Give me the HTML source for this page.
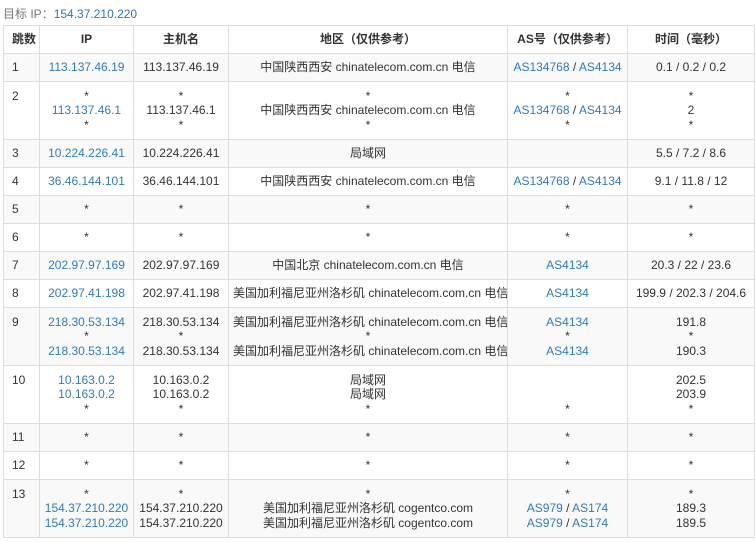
<!DOCTYPE html>
<html><head><meta charset="utf-8"><style>
body{margin:0;background:#fff;font-family:"Liberation Sans","Noto Sans CJK SC",sans-serif;font-size:12px;color:#333;width:756px;height:542px;overflow:hidden}
.t{position:absolute;left:3px;top:5px;color:#777}
.t a{color:#2f75b5}
table{position:absolute;left:3px;top:25px;border-collapse:collapse;width:751px;table-layout:fixed}
td,th{border:1px solid #ddd;text-align:center;vertical-align:middle;padding:0 4px;line-height:14.5px;white-space:nowrap;overflow:hidden}
th{height:27px;font-weight:bold;color:#333}
td{height:27px}
tr.m td{height:57px}
tr.s td{background:#f9f9f9}
td:first-child,th:first-child{text-align:left;padding-left:8px}
tr.m td:first-child{vertical-align:top;padding-top:7px;height:50px}
a{color:#2f7bbf;text-decoration:none}
</style></head><body>
<div class="t">目标 IP：<a>154.37.210.220</a></div>
<table>
<colgroup><col style="width:36px"><col style="width:94px"><col style="width:95px"><col style="width:279px"><col style="width:120px"><col style="width:127px"></colgroup>
<tr><th>跳数</th><th>IP</th><th>主机名</th><th>地区（仅供参考）</th><th>AS号（仅供参考）</th><th>时间（毫秒）</th></tr>
<tr class="s"><td>1</td><td><a>113.137.46.19</a></td><td>113.137.46.19</td><td>中国陕西西安 chinatelecom.com.cn 电信</td><td><a>AS134768</a> / <a>AS4134</a></td><td>0.1 / 0.2 / 0.2</td></tr>
<tr class="m"><td>2</td><td>*<br><a>113.137.46.1</a><br>*</td><td>*<br>113.137.46.1<br>*</td><td>*<br>中国陕西西安 chinatelecom.com.cn 电信<br>*</td><td>*<br><a>AS134768</a> / <a>AS4134</a><br>*</td><td>*<br>2<br>*</td></tr>
<tr class="s"><td>3</td><td><a>10.224.226.41</a></td><td>10.224.226.41</td><td>局域网</td><td></td><td>5.5 / 7.2 / 8.6</td></tr>
<tr><td>4</td><td><a>36.46.144.101</a></td><td>36.46.144.101</td><td>中国陕西西安 chinatelecom.com.cn 电信</td><td><a>AS134768</a> / <a>AS4134</a></td><td>9.1 / 11.8 / 12</td></tr>
<tr class="s"><td>5</td><td>*</td><td>*</td><td>*</td><td>*</td><td>*</td></tr>
<tr><td>6</td><td>*</td><td>*</td><td>*</td><td>*</td><td>*</td></tr>
<tr class="s"><td>7</td><td><a>202.97.97.169</a></td><td>202.97.97.169</td><td>中国北京 chinatelecom.com.cn 电信</td><td><a>AS4134</a></td><td>20.3 / 22 / 23.6</td></tr>
<tr><td>8</td><td><a>202.97.41.198</a></td><td>202.97.41.198</td><td>美国加利福尼亚州洛杉矶 chinatelecom.com.cn 电信</td><td><a>AS4134</a></td><td>199.9 / 202.3 / 204.6</td></tr>
<tr class="m s"><td>9</td><td><a>218.30.53.134</a><br>*<br><a>218.30.53.134</a></td><td>218.30.53.134<br>*<br>218.30.53.134</td><td>美国加利福尼亚州洛杉矶 chinatelecom.com.cn 电信<br>*<br>美国加利福尼亚州洛杉矶 chinatelecom.com.cn 电信</td><td><a>AS4134</a><br>*<br><a>AS4134</a></td><td>191.8<br>*<br>190.3</td></tr>
<tr class="m"><td>10</td><td><a>10.163.0.2</a><br><a>10.163.0.2</a><br>*</td><td>10.163.0.2<br>10.163.0.2<br>*</td><td>局域网<br>局域网<br>*</td><td><br><br>*</td><td>202.5<br>203.9<br>*</td></tr>
<tr class="s"><td>11</td><td>*</td><td>*</td><td>*</td><td>*</td><td>*</td></tr>
<tr><td>12</td><td>*</td><td>*</td><td>*</td><td>*</td><td>*</td></tr>
<tr class="m s"><td>13</td><td>*<br><a>154.37.210.220</a><br><a>154.37.210.220</a></td><td>*<br>154.37.210.220<br>154.37.210.220</td><td>*<br>美国加利福尼亚州洛杉矶 cogentco.com<br>美国加利福尼亚州洛杉矶 cogentco.com</td><td>*<br><a>AS979</a> / <a>AS174</a><br><a>AS979</a> / <a>AS174</a></td><td>*<br>189.3<br>189.5</td></tr>
</table>
</body></html>
